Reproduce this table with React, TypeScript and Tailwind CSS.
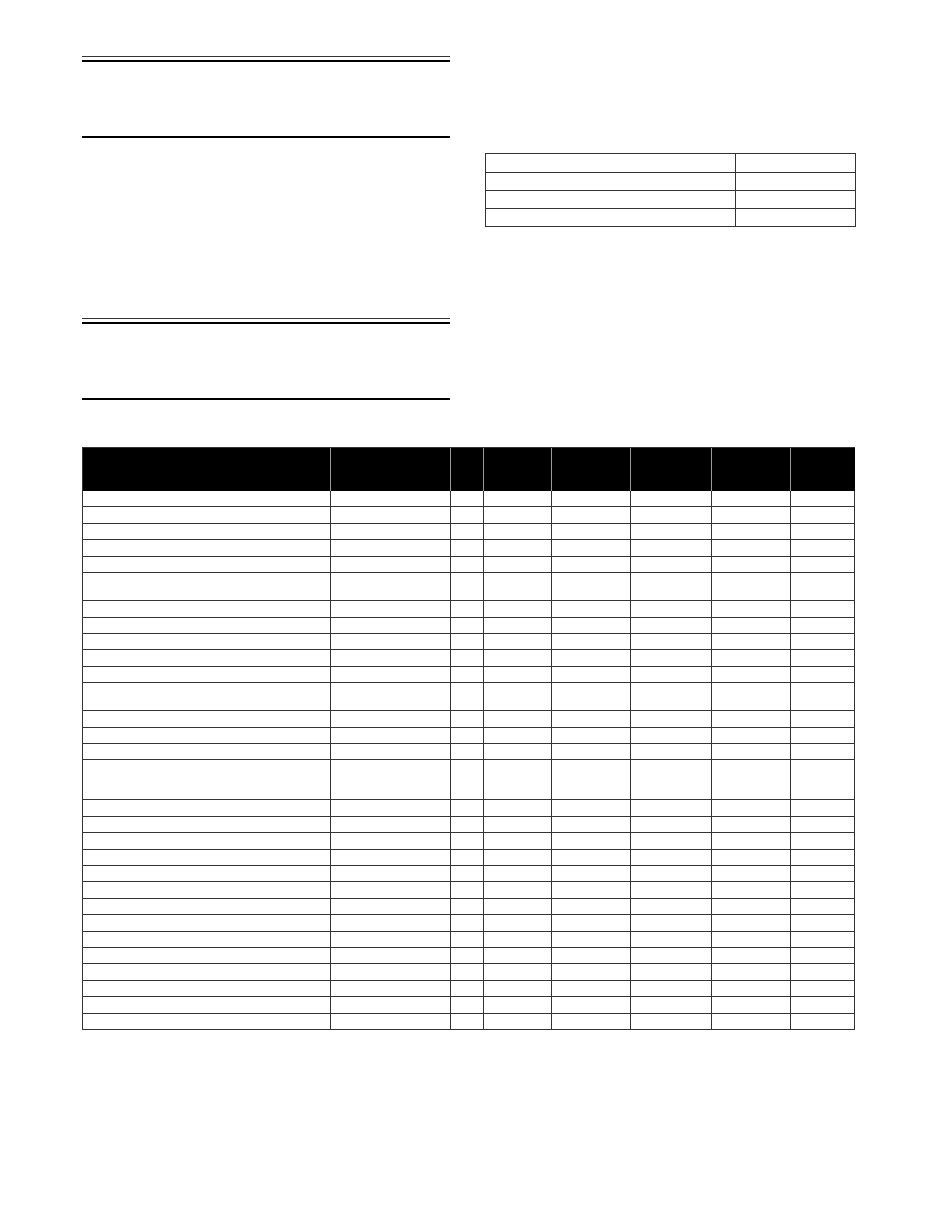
// Blank form page: ruled section headers, a small key table and a ledger grid.
const COLS = "grid grid-cols-[248px_120px_33px_68px_79px_81px_79px_64px]";

// row sizes of the ledger, top to bottom
const rows: Array<"s" | "d" | "t"> = [
  "s", "s", "s", "s", "s", "d",
  "s", "s", "s", "s", "s", "d",
  "s", "s", "s", "t",
  "s", "s", "s", "s", "s", "s", "s", "s", "s", "s", "s", "s", "s", "s",
];

const rowHeight = { s: "h-[16.4px]", d: "h-[28.2px]", t: "h-[40px]" };

function SectionRule() {
  return (
    <div>
      <div className="h-px bg-[#333]" />
      <div className="mt-[3px] h-[2px] bg-black" />
      <div className="h-[74px]" />
      <div className="h-[2px] bg-black" />
    </div>
  );
}

function KeyTable() {
  const heights = ["h-[19.3px]", "h-[18px]", "h-[18px]", "h-[17.7px]"];
  return (
    <div className="border-t border-l border-[#333]">
      {heights.map((h, i) => (
        <div key={i} className={`grid grid-cols-[250px_120px] ${h}`}>
          <div className="border-r border-b border-[#333]" />
          <div className="border-r border-b border-[#333]" />
        </div>
      ))}
    </div>
  );
}

function Ledger() {
  return (
    <div className="w-[773px] border-t border-l border-[#333]">
      <div className={`${COLS} h-[43px] bg-black`}>
        {Array.from({ length: 8 }).map((_, i) => (
          <div
            key={i}
            className={i < 7 ? "border-r border-[#9a9a9a]" : "border-r border-black"}
          />
        ))}
      </div>
      {rows.map((r, ri) => (
        <div key={ri} className={`${COLS} ${rowHeight[r]}`}>
          {Array.from({ length: 8 }).map((_, ci) => (
            <div key={ci} className="border-r border-b border-[#333]" />
          ))}
        </div>
      ))}
    </div>
  );
}

export default function App() {
  return (
    <div className="w-[935px] min-h-[1210px] bg-white pl-[82px] pt-[56px] font-['Liberation_Sans',Arial,sans-serif]">
      <div className="flex gap-[35px]">
        <div className="w-[368px]">
          <SectionRule />
          <div className="h-[180px]" />
          <SectionRule />
        </div>
        <div className="w-[371px] pt-[97px]">
          <KeyTable />
        </div>
      </div>
      <div className="mt-[47px]">
        <Ledger />
      </div>
    </div>
  );
}
